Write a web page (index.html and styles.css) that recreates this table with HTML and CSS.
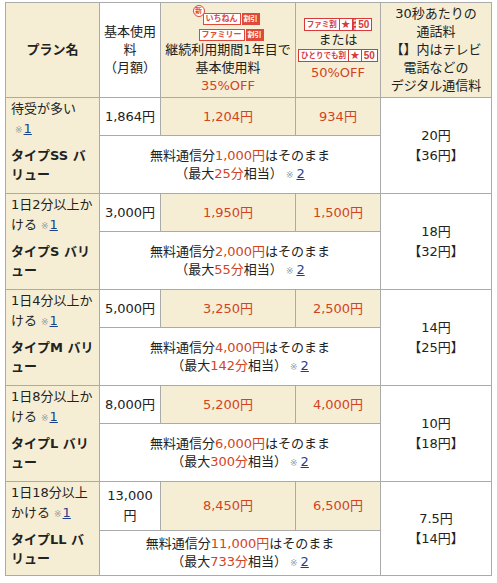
FILE: index.html
```html
<!DOCTYPE html>
<html lang="ja">
<head>
<meta charset="utf-8">
<title>プラン</title>
<link rel="stylesheet" href="styles.css">
</head>
<body>
<table class="plans">
  <colgroup>
    <col class="c1"><col class="c2"><col class="c3"><col class="c4"><col class="c5">
  </colgroup>
  <thead>
    <tr class="head">
      <th class="beige strong">プラン名</th>
      <th>基本使用料<br>（月額）</th>
      <th class="beige">
        <div class="logo ichinen"><span class="shin">新</span><span class="lbox">いちねん</span><span class="lfill">割引</span></div>
        <div class="logo family"><span class="lbox">ファミリー</span><span class="lfill">割引</span></div>
        継続利用期間1年目で基本使用料<br><span class="red">35%OFF</span>
      </th>
      <th class="beige disc">
        <div class="logo2"><span class="seg name">ファミ割</span><span class="seg star">★</span><span class="seg max">MAX</span><span class="seg num">50</span></div>
        <div>または</div>
        <div class="logo2"><span class="seg name">ひとりでも割</span><span class="seg star">★</span><span class="seg num">50</span></div>
        <div class="red off">50%OFF</div>
      </th>
      <th class="beige">30秒あたりの<br>通話料<br>【】内はテレビ<br>電話などの<br>デジタル通信料</th>
    </tr>
  </thead>
  <tbody>
    <tr class="price">
      <td rowspan="2" class="beige name"><p>待受が多い<span class="kome">※</span><a href="#n1">1</a></p><p class="type">タイプSS バリュー</p></td>
      <td>1,864円</td>
      <td class="beige red">1,204円</td>
      <td class="beige red">934円</td>
      <td rowspan="2" class="rate">20円<br>【36円】</td>
    </tr>
    <tr class="free">
      <td colspan="3">無料通信分<span class="red">1,000円</span>はそのまま<br>（最大<span class="red">25分</span>相当）<span class="kome k2">※</span><a href="#n2">2</a></td>
    </tr>

    <tr class="price">
      <td rowspan="2" class="beige name"><p>1日2分以上かける<span class="kome">※</span><a href="#n1">1</a></p><p class="type">タイプS バリュー</p></td>
      <td>3,000円</td>
      <td class="beige red">1,950円</td>
      <td class="beige red">1,500円</td>
      <td rowspan="2" class="rate">18円<br>【32円】</td>
    </tr>
    <tr class="free">
      <td colspan="3">無料通信分<span class="red">2,000円</span>はそのまま<br>（最大<span class="red">55分</span>相当）<span class="kome k2">※</span><a href="#n2">2</a></td>
    </tr>

    <tr class="price">
      <td rowspan="2" class="beige name"><p>1日4分以上かける<span class="kome">※</span><a href="#n1">1</a></p><p class="type">タイプM バリュー</p></td>
      <td>5,000円</td>
      <td class="beige red">3,250円</td>
      <td class="beige red">2,500円</td>
      <td rowspan="2" class="rate">14円<br>【25円】</td>
    </tr>
    <tr class="free">
      <td colspan="3">無料通信分<span class="red">4,000円</span>はそのまま<br>（最大<span class="red">142分</span>相当）<span class="kome k2">※</span><a href="#n2">2</a></td>
    </tr>

    <tr class="price">
      <td rowspan="2" class="beige name"><p>1日8分以上かける<span class="kome">※</span><a href="#n1">1</a></p><p class="type">タイプL バリュー</p></td>
      <td>8,000円</td>
      <td class="beige red">5,200円</td>
      <td class="beige red">4,000円</td>
      <td rowspan="2" class="rate">10円<br>【18円】</td>
    </tr>
    <tr class="free">
      <td colspan="3">無料通信分<span class="red">6,000円</span>はそのまま<br>（最大<span class="red">300分</span>相当）<span class="kome k2">※</span><a href="#n2">2</a></td>
    </tr>

    <tr class="price tall">
      <td rowspan="2" class="beige name"><p>1日18分以上かける<span class="kome">※</span><a href="#n1">1</a></p><p class="type">タイプLL バリュー</p></td>
      <td>13,000円</td>
      <td class="beige red">8,450円</td>
      <td class="beige red">6,500円</td>
      <td rowspan="2" class="rate">7.5円<br>【14円】</td>
    </tr>
    <tr class="free short">
      <td colspan="3">無料通信分<span class="red">11,000円</span>はそのまま<br>（最大<span class="red">733分</span>相当）<span class="kome k2">※</span><a href="#n2">2</a></td>
    </tr>
  </tbody>
</table>
</body>
</html>
```

FILE: styles.css
```css
* { box-sizing: border-box; }
body {
  margin: 0;
  padding: 2px 5px;
  font-family: "DejaVu Sans", "Noto Sans CJK JP", sans-serif;
  font-size: 13px;
  color: #222;
  background: #fff;
}
.plans {
  border-collapse: collapse;
  table-layout: fixed;
  width: 486px;
}
.c1 { width: 94px; }
.c2 { width: 61px; }
.c3 { width: 135px; }
.c4 { width: 85px; }
.c5 { width: 111px; }
.plans th, .plans td {
  border: 1px solid #aaa;
  padding: 0 2px;
  text-align: center;
  vertical-align: middle;
  font-weight: normal;
  line-height: 18px;
}
.beige { background: #f5eed4; }
.red { color: #d2441f; }
.plans .strong { font-weight: bold; }
.head { height: 95px; }
.price { height: 38px; }
.price td { line-height: 20px; }
.free { height: 58px; }
.price.tall { height: 49px; }
.free.short { height: 45px; }

.plans td.name {
  text-align: left;
  vertical-align: top;
  line-height: 20px;
  padding: 1px 5px 0;
}
.name p { margin: 0; }
.name .type { font-weight: bold; margin-top: 7px; line-height: 19px; }
.kome {
  color: #9a9a9a;
  font-size: 9px;
  line-height: 1;
  margin-left: 4px;
  margin-right: 1px;
}
.kome.k2 { margin-left: 3px; margin-right: 3px; }
a { color: #1e3f8c; }

/* header logos (col 3) */
.logo {
  display: flex;
  justify-content: center;
  align-items: flex-end;
  font-size: 8px;
  line-height: 10px;
  font-weight: bold;
}
.ichinen { height: 20px; margin-right: 4px; }
.family { height: 12px; margin-top: 4px; margin-left: 10px; margin-right: 4px; }
.shin {
  width: 12px;
  height: 12px;
  border: 1px solid #e0483a;
  border-radius: 50%;
  color: #e0483a;
  background: #fff;
  font-size: 7px;
  line-height: 10px;
  text-align: center;
  align-self: flex-start;
  margin-right: -2px;
  position: relative;
  z-index: 1;
}
.lbox {
  border: 1px solid #e0483a;
  color: #e0483a;
  background: #fff;
  padding: 0 2px;
  height: 12px;
  line-height: 10px;
}
.lfill {
  background: #e0483a;
  color: #fff;
  padding: 0 2px;
  height: 12px;
  line-height: 12px;
  margin-left: 1px;
  font-size: 7px;
}

/* header logos (col 4) */
.logo2 {
  display: flex;
  width: fit-content;
  margin: 0 auto;
  border: 1px solid #d83a3a;
  background: #fff;
  height: 13px;
  color: #d83a3a;
  font-weight: bold;
}
.seg {
  display: block;
  height: 11px;
  line-height: 11px;
  padding: 0 1px;
}
.seg.name { font-size: 7.5px; border-right: 1px solid #d83a3a; padding: 0 2px; }
.seg.star { font-size: 11px; border-right: 1px solid #d83a3a; }
.seg.max {
  background: #d83a3a;
  color: #fff;
  font-size: 3.5px;
  line-height: 3.5px;
  padding: 0;
  writing-mode: vertical-rl;
  text-orientation: upright;
}
.seg.num {
  font-family: "Liberation Sans", sans-serif;
  font-size: 10px;
  padding: 0 2px;
}
.off { margin-top: 2px; }
```
